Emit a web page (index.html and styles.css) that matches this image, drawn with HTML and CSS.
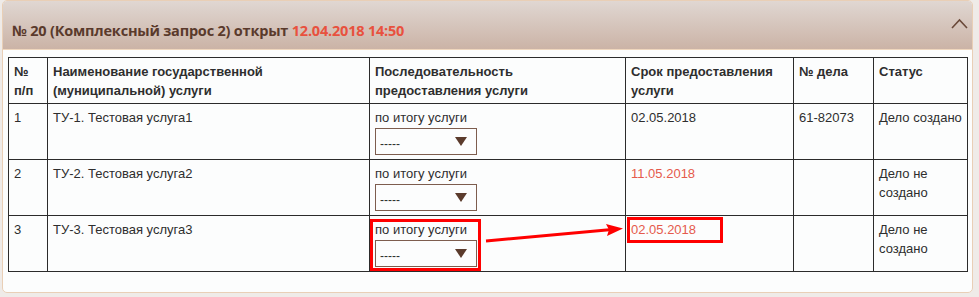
FILE: index.html
```html
<!DOCTYPE html>
<html lang="ru">
<head>
    <meta charset="UTF-8">
    <title>Комплексный запрос</title>
    <link rel="stylesheet" href="styles.css">
</head>
<body>
    <div class="panel">
        <div class="panel-head">
            <span class="panel-title">№ 20 (Комплексный запрос 2) открыт <span class="opened">12.04.2018 14:50</span></span>
            <svg class="toggle" width="17" height="11" viewBox="0 0 17 11">
                <polyline points="1,10 8.5,2 16,10" fill="none" stroke="#6b4a3a" stroke-width="1.6"/>
            </svg>
        </div>
        <div class="panel-body">
            <table class="services">
                <colgroup>
                    <col style="width:39px">
                    <col style="width:322px">
                    <col style="width:256px">
                    <col style="width:168px">
                    <col style="width:80px">
                    <col style="width:94px">
                </colgroup>
                <tr class="head">
                    <th>№<br>п/п</th>
                    <th>Наименование государственной<br>(муниципальной) услуги</th>
                    <th>Последовательность<br>предоставления услуги</th>
                    <th>Срок предоставления<br>услуги</th>
                    <th>№ дела</th>
                    <th>Статус</th>
                </tr>
                <tr>
                    <td>1</td>
                    <td>ТУ-1. Тестовая услуга1</td>
                    <td>по итогу услуги
                        <div class="pick"><span>-----</span><i class="caret"></i></div>
                    </td>
                    <td>02.05.2018</td>
                    <td>61-82073</td>
                    <td>Дело создано</td>
                </tr>
                <tr>
                    <td>2</td>
                    <td>ТУ-2. Тестовая услуга2</td>
                    <td>по итогу услуги
                        <div class="pick"><span>-----</span><i class="caret"></i></div>
                    </td>
                    <td class="late">11.05.2018</td>
                    <td></td>
                    <td>Дело не создано</td>
                </tr>
                <tr>
                    <td>3</td>
                    <td>ТУ-3. Тестовая услуга3</td>
                    <td>по итогу услуги
                        <div class="pick"><span>-----</span><i class="caret"></i></div>
                    </td>
                    <td class="late">02.05.2018</td>
                    <td></td>
                    <td>Дело не создано</td>
                </tr>
            </table>
        </div>
    </div>

    <!-- red markup drawn over the table -->
    <svg class="marks" width="979" height="297" viewBox="0 0 979 297">
        <rect x="371.5" y="220.5" width="108" height="49" fill="none" stroke="#f00" stroke-width="3"/>
        <rect x="628.5" y="218.5" width="93" height="23" fill="none" stroke="#f00" stroke-width="3"/>
        <line x1="486" y1="241" x2="612" y2="229.5" stroke="#f00" stroke-width="3"/>
        <polygon points="623,228.5 606,224 609,229.8 607,236" fill="#f00"/>
    </svg>
</body>
</html>
```

FILE: styles.css
```css
body {
    margin: 0;
    background: #efebe8;
    font-family: "Liberation Sans", Arial, sans-serif;
    color: #2e2e2e;
}

.panel {
    width: 969px;
    height: 291px;
    margin-left: 2px;
    border: 1px solid #e9cfb6;
    border-radius: 5px;
    background: #fcfdfd;
    overflow: hidden;
}

.panel-head {
    height: 48px;
    display: flex;
    align-items: center;
    justify-content: space-between;
    padding: 0 4px 0 9px;
    background: linear-gradient(#e0d7d2, #cbb3a6);
    border-bottom: 1px solid #efd6bd;
}

.panel-title {
    font-family: "Open Sans", sans-serif;
    font-weight: 700;
    font-size: 14.5px;
    color: #5a3a2c;
    letter-spacing: -0.2px;
    padding-top: 10px;
}

.opened {
    color: #e8513e;
}

.toggle {
    margin-top: -4px;
}

.panel-body {
    padding: 7px 5px 0 5px;
}

.services {
    border-collapse: collapse;
    table-layout: fixed;
    width: 960px;
    font-size: 13px;
    line-height: 19px;
}

.services th,
.services td {
    border: 1px solid #2b2b2b;
    vertical-align: top;
    text-align: left;
    padding: 4px 4px 0 5px;
}

.services th {
    height: 41px;
    font-weight: 700;
}

.services td {
    height: 51px;
}

.late {
    color: #e55a4c;
}

.pick {
    height: 25px;
    border: 1px solid #7d5d4e;
    display: flex;
    align-items: center;
    justify-content: space-between;
    padding: 0 9px 0 4px;
    box-sizing: content-box;
    width: 87px;
    margin-top: 1px;
    font-size: 12px;
    line-height: 1;
}

.pick span {
    padding-top: 4px;
}

.caret {
    width: 0;
    height: 0;
    border-left: 6px solid transparent;
    border-right: 6px solid transparent;
    border-top: 9px solid #5b3b2c;
}

.marks {
    position: absolute;
    top: 0;
    left: 0;
    pointer-events: none;
}
```
